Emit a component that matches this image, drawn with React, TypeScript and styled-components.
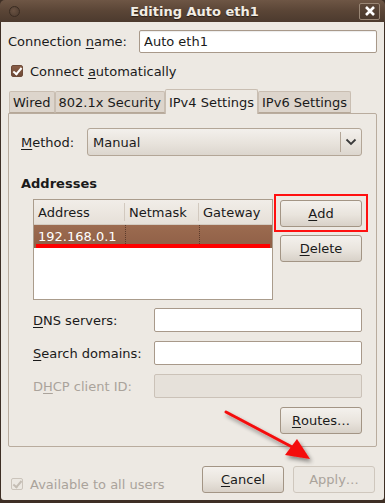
import styled, { createGlobalStyle } from "styled-components";

const GlobalStyle = createGlobalStyle`
  html, body {
    margin: 0;
    padding: 0;
    width: 385px;
    height: 503px;
    overflow: hidden;
    background: #3e2f25;
  }
  * {
    box-sizing: border-box;
  }
`;

export default function App() {
  return (
    <>
      <GlobalStyle />
      <Window>
        <TitleBar>
          <WinDot />
          <Title>Editing Auto eth1</Title>
          <CloseBox>
            <svg width="12" height="12" viewBox="0 0 12 12">
              <path d="M2 2 L10 10 M10 2 L2 10" stroke="#fff" strokeWidth="2.6" />
            </svg>
          </CloseBox>
        </TitleBar>
        <Body>
          <NameRow>
            <Label>
              Connection <U>n</U>ame:
            </Label>
            <TextInput defaultValue="Auto eth1" />
          </NameRow>
          <CheckRow>
            <CheckBox />
            <span>
              Connect <U>a</U>utomatically
            </span>
          </CheckRow>
          <TabStrip>
            <Tab>Wired</Tab>
            <Tab>802.1x Security</Tab>
            <Tab $active>IPv4 Settings</Tab>
            <Tab>IPv6 Settings</Tab>
          </TabStrip>
          <Panel>
            <MethodRow>
              <Label>
                <U>M</U>ethod:
              </Label>
              <Combo>
                <ComboText>Manual</ComboText>
                <ComboArrow>
                  <svg width="12" height="8" viewBox="0 0 12 8">
                    <path d="M1.5 1.5 L6 6 L10.5 1.5" stroke="#3a3a3a" strokeWidth="1.8" fill="none" />
                  </svg>
                </ComboArrow>
              </Combo>
            </MethodRow>
            <Heading>Addresses</Heading>
            <AddrRow>
              <Tree>
                <TreeHead>
                  <HeadCell $w={91}>Address</HeadCell>
                  <HeadCell $w={74}>Netmask</HeadCell>
                  <HeadCell $w={72} $last>
                    Gateway
                  </HeadCell>
                </TreeHead>
                <TreeRow>
                  <RowCell $w={91}>192.168.0.1</RowCell>
                  <RowCell $w={74} $dotted />
                  <RowCell $w={72} $dotted />
                </TreeRow>
                <Underline />
              </Tree>
              <SideButtons>
                <Highlight>
                  <Button>
                    <U>A</U>dd
                  </Button>
                </Highlight>
                <Button>
                  <U>D</U>elete
                </Button>
              </SideButtons>
            </AddrRow>
            <Fields>
              <FieldRow>
                <FieldLabel>
                  <U>D</U>NS servers:
                </FieldLabel>
                <FieldInput />
              </FieldRow>
              <FieldRow>
                <FieldLabel>
                  <U>S</U>earch domains:
                </FieldLabel>
                <FieldInput />
              </FieldRow>
              <FieldRow>
                <FieldLabel $disabled>
                  D<U>H</U>CP client ID:
                </FieldLabel>
                <FieldInput disabled />
              </FieldRow>
            </Fields>
            <RoutesRow>
              <Button>
                <U>R</U>outes…
              </Button>
            </RoutesRow>
          </Panel>
          <Footer>
            <CheckRow $disabled>
              <CheckBox $disabled />
              <span>Available to all users</span>
            </CheckRow>
            <FooterButtons>
              <Button>
                <U>C</U>ancel
              </Button>
              <Button $disabled>Apply…</Button>
            </FooterButtons>
          </Footer>
          <Arrow width="120" height="70" viewBox="0 0 120 70">
            <defs>
              <filter id="sh" x="-20%" y="-20%" width="140%" height="140%">
                <feGaussianBlur in="SourceAlpha" stdDeviation="2" />
                <feOffset dx="2" dy="3" result="b" />
                <feComponentTransfer>
                  <feFuncA type="linear" slope="0.45" />
                </feComponentTransfer>
                <feMerge>
                  <feMergeNode />
                  <feMergeNode in="SourceGraphic" />
                </feMerge>
              </filter>
            </defs>
            <g filter="url(#sh)">
              <path d="M4 4 L72 40" stroke="#f40d0d" strokeWidth="3" strokeLinecap="round" />
              <path d="M63 47 L75 31 L88 51 Z" fill="#f40d0d" />
            </g>
          </Arrow>
        </Body>
      </Window>
    </>
  );
}

const Window = styled.div`
  width: 385px;
  height: 503px;
  display: flex;
  flex-direction: column;
  background: #3e2f25;
  font-family: "DejaVu Sans", "Liberation Sans", sans-serif;
  font-size: 13px;
  color: #1a1a1a;
`;

const TitleBar = styled.div`
  height: 22px;
  flex: none;
  display: flex;
  align-items: center;
  padding: 0 5px 0 9px;
  background: linear-gradient(#6e5645, #5a4536 50%, #4c3a2e);
  border-top-left-radius: 5px;
  border-top-right-radius: 5px;
`;

const WinDot = styled.div`
  width: 11px;
  height: 11px;
  border-radius: 50%;
  border: 1px solid #3a2c22;
  background: radial-gradient(circle at 40% 40%, #6a5242, #4b3a2e);
`;

const Title = styled.div`
  flex: 1;
  text-align: center;
  font-weight: bold;
  font-size: 13px;
  color: #f2ede4;
  text-shadow: 0 1px 1px #2a1e16;
  padding-left: 10px;
`;

const CloseBox = styled.div`
  width: 21px;
  height: 17px;
  display: flex;
  align-items: center;
  justify-content: center;
  border: 1px solid #9a8776;
  border-radius: 2px;
  background: linear-gradient(#5c4738, #4a392d);
`;

const Body = styled.div`
  position: relative;
  flex: 1;
  margin: 0 1px 3px 1px;
  background: #ede9e3;
  padding: 8px 7px 0 7px;
  display: flex;
  flex-direction: column;
  border-bottom-left-radius: 3px;
  border-bottom-right-radius: 3px;
`;

const U = styled.span`
  text-decoration: underline;
  text-underline-offset: 2px;
`;

const Label = styled.span`
  white-space: nowrap;
`;

const NameRow = styled.div`
  display: flex;
  align-items: center;
  justify-content: space-between;
  height: 23px;
`;

const TextInput = styled.input`
  width: 238px;
  height: 23px;
  border: 1px solid #a8998a;
  border-radius: 2px;
  background: #fff;
  font: inherit;
  color: #1a1a1a;
  padding: 0 4px;
  outline: none;
  box-shadow: inset 0 1px 1px rgba(0, 0, 0, 0.08);
`;

const CheckRow = styled.div<{ $disabled?: boolean }>`
  display: flex;
  align-items: center;
  gap: 7px;
  height: 18px;
  margin: 9px 0 0 3px;
  color: ${(p) => (p.$disabled ? "#aaa39b" : "#1a1a1a")};
`;

const CheckBox = styled.span<{ $disabled?: boolean }>`
  width: 12px;
  height: 12px;
  border-radius: 2px;
  border: 1px solid ${(p) => (p.$disabled ? "#cbc4bb" : "#6d4a38")};
  background: ${(p) => (p.$disabled ? "#ece8e2" : "linear-gradient(#8a5e47, #6e4a37)")};
  position: relative;
  &::after {
    content: "";
    position: absolute;
    left: 3px;
    top: 0px;
    width: 3px;
    height: 7px;
    border: solid ${(p) => (p.$disabled ? "#c4bdb4" : "#fff")};
    border-width: 0 2px 2px 0;
    transform: rotate(40deg);
  }
`;

const TabStrip = styled.div`
  display: flex;
  align-items: flex-end;
  margin: 9px 0 0 1px;
  height: 24px;
  position: relative;
  z-index: 1;
`;

const Tab = styled.div<{ $active?: boolean }>`
  height: ${(p) => (p.$active ? "25px" : "22px")};
  padding: 0 3px;
  display: flex;
  align-items: center;
  white-space: nowrap;
  border: 1px solid #c9beb2;
  border-bottom: ${(p) => (p.$active ? "none" : "1px solid #b6a898")};
  border-radius: 2px 2px 0 0;
  background: ${(p) => (p.$active ? "#ede9e3" : "#ddd5cc")};
  margin-bottom: ${(p) => (p.$active ? "-1px" : "0")};
  padding-top: ${(p) => (p.$active ? "0" : "1px")};
`;

const Panel = styled.div`
  height: 334px;
  border: 1px solid #b9ac9e;
  border-radius: 0 2px 2px 2px;
  padding: 14px 14px 0 12px;
  display: flex;
  flex-direction: column;
`;

const MethodRow = styled.div`
  display: flex;
  align-items: center;
  justify-content: space-between;
  height: 28px;
`;

const Combo = styled.div`
  width: 275px;
  height: 28px;
  display: flex;
  align-items: center;
  border: 1px solid #b3a697;
  border-radius: 3px;
  background: linear-gradient(#f3f0ec, #e8e3dc 55%, #dcd6ce);
`;

const ComboText = styled.span`
  flex: 1;
  padding-left: 5px;
`;

const ComboArrow = styled.span`
  width: 21px;
  height: 20px;
  display: flex;
  align-items: center;
  justify-content: center;
  border-left: 1px solid #b3a697;
`;

const Heading = styled.div`
  font-weight: bold;
  margin-top: 20px;
  height: 16px;
  line-height: 16px;
`;

const AddrRow = styled.div`
  display: flex;
  justify-content: space-between;
  margin: 7px 0 0 12px;
  height: 101px;
`;

const Tree = styled.div`
  position: relative;
  width: 240px;
  height: 101px;
  border: 1px solid #aa9c8c;
  background: #fff;
`;

const TreeHead = styled.div`
  display: flex;
  height: 25px;
  background: linear-gradient(#f1ede8, #e6e0d8);
  border-bottom: 1px solid #d3cbc1;
`;

const HeadCell = styled.div<{ $w: number; $last?: boolean }>`
  width: ${(p) => p.$w}px;
  display: flex;
  align-items: center;
  padding-left: 4px;
  border-right: ${(p) => (p.$last ? "none" : "1px solid #d2c9bf")};
  margin: 3px 0;
`;

const TreeRow = styled.div`
  display: flex;
  height: 23px;
  background: linear-gradient(#9c6b50, #8f5f46);
  color: #fff;
`;

const RowCell = styled.div<{ $w: number; $dotted?: boolean }>`
  width: ${(p) => p.$w}px;
  display: flex;
  align-items: center;
  padding-left: 4px;
  border-left: ${(p) => (p.$dotted ? "1px dotted #5c3b2b" : "none")};
`;

const Underline = styled.div`
  position: absolute;
  left: 2px;
  top: 44px;
  width: 234px;
  height: 4px;
  background: #ff0000;
`;

const SideButtons = styled.div`
  display: flex;
  flex-direction: column;
  gap: 8px;
  width: 82px;
  padding-top: 1px;
`;

const Highlight = styled.div`
  position: relative;
  &::before {
    content: "";
    position: absolute;
    left: -6px;
    top: -6px;
    right: -6px;
    bottom: -5px;
    border: 2px solid #ff1010;
    pointer-events: none;
  }
`;

const Button = styled.div<{ $disabled?: boolean }>`
  width: 82px;
  height: 27px;
  display: flex;
  align-items: center;
  justify-content: center;
  border: 1px solid ${(p) => (p.$disabled ? "#cfc7bd" : "#a39585")};
  border-radius: 3px;
  background: ${(p) =>
    p.$disabled ? "#ebe7e1" : "linear-gradient(#f4f1ed, #e9e4dd 55%, #d8d1c8)"};
  color: ${(p) => (p.$disabled ? "#aaa39b" : "#1a1a1a")};
  white-space: nowrap;
`;

const Fields = styled.div`
  display: flex;
  flex-direction: column;
  gap: 9px;
  margin: 8px 0 0 12px;
`;

const FieldRow = styled.div`
  display: flex;
  align-items: center;
  justify-content: space-between;
  height: 24px;
`;

const FieldLabel = styled.span<{ $disabled?: boolean }>`
  color: ${(p) => (p.$disabled ? "#aaa39b" : "#1a1a1a")};
  white-space: nowrap;
`;

const FieldInput = styled.input`
  width: 208px;
  height: 24px;
  border: 1px solid #a8998a;
  border-radius: 2px;
  background: #fff;
  outline: none;
  &:disabled {
    background: #e6e1da;
    border-color: #cbc2b8;
  }
`;

const RoutesRow = styled.div`
  display: flex;
  justify-content: flex-end;
  margin-top: 9px;
`;

const Footer = styled.div`
  display: flex;
  align-items: center;
  justify-content: space-between;
  margin-top: 19px;
  height: 27px;
  padding-right: 2px;
`;

const FooterButtons = styled.div`
  display: flex;
  gap: 9px;
`;

const Arrow = styled.svg`
  position: absolute;
  left: 221px;
  top: 386px;
  pointer-events: none;
`;
